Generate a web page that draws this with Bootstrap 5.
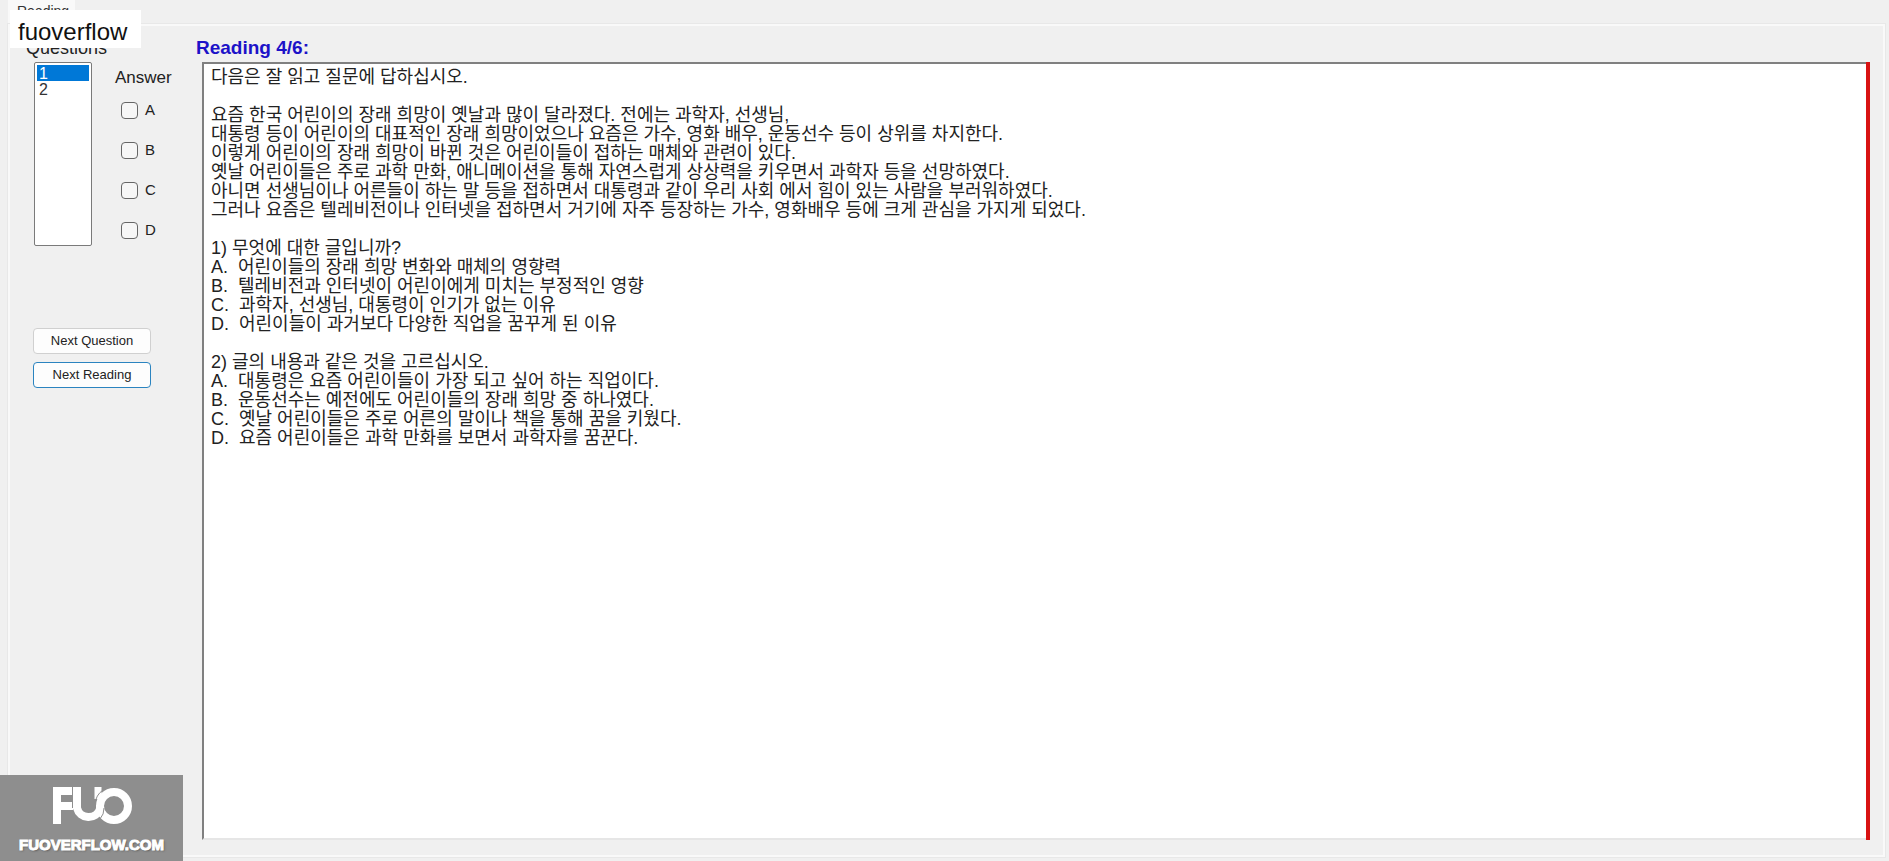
<!DOCTYPE html>
<html lang="ko">
<head>
<meta charset="utf-8">
<meta name="viewport" content="width=device-width, initial-scale=1">
<title>Reading</title>
<link href="https://cdn.jsdelivr.net/npm/bootstrap@5.3.0/dist/css/bootstrap.min.css" rel="stylesheet">
<style>
  body { background: #f0f0f0; color: #222; font: 16px/20px "Liberation Sans", "Noto Sans CJK KR", sans-serif; }
  .tab-strip { height: 24px; padding-left: 8px; }
  .tab-strip a { width: 67px; padding-left: 9px; background: #f9f9f9; color: #333; font-size: 14px; line-height: 22px; }
  .tab-page { margin: 0 4px 4px 8px; border: 2px solid #f9f9f9; outline: 1px solid #e8e8e8; min-height: 0; }
  .side { width: 192px; flex: none; padding: 12px 0 0 16px; }
  .side h2 { font-size: 18px; line-height: 20px; margin: 0 0 4px; }
  .answer-title { font-size: 17px; }
  .question-list { width: 58px; height: 184px; margin-left: 8px; padding: 2px; border: 1px solid #7a7a7a; background: #fff; color: #333; overflow: hidden; outline: 0; font: 16px/16px "Liberation Sans", sans-serif; }
  .question-list option { padding: 0 2px; height: 16px; min-height: 16px; line-height: 16px; }
  .question-list option:checked { background: #0078d7 linear-gradient(#0078d7, #0078d7); color: #fff; }
  .answers { padding: 7px 0 0 23px; }
  .answer-title { margin-bottom: 14px; }
  .answers .form-check { gap: 7px; margin: 0 0 20px 6px; padding: 0; min-height: 20px; font-size: 15px; }
  .answers .form-check-input { width: 17px; height: 17px; margin: 2px 0 0; float: none; border: 1px solid #666; border-radius: 4px; background-color: #f6f6f6; }
  .side-buttons { margin: 82px 0 0 7px; width: 118px; }
  .side-buttons .btn { height: 26px; padding: 0; font-size: 13px; line-height: 24px; color: #222; background: #fdfdfd; border: 1px solid #d0d0d0; border-radius: 4px; }
  .side-buttons .btn.default-action { border-color: #2b84c0; }
  .reader { padding: 12px 13px 15px 0; min-width: 0; }
  .reader h1 { margin: 0 0 4px -6px; font-size: 19px; font-weight: 700; line-height: 20px; color: #1c12c8; }
  .passage { resize: none; outline: 0; background: #fff; color: #222; border: 0 solid #808080; border-width: 2px 0 0 2px; border-bottom: 2px solid #e6e6e6; padding: 4px 7px; font: 18px/19px "Liberation Sans", "Noto Sans CJK KR", sans-serif; overflow: hidden; }
  .timer-bar { width: 4px; flex: none; background: #d81212; }
  .mark-top { left: 10px; top: 10px; width: 131px; height: 38px; padding-left: 8px; background: #fff; color: #111; font-size: 24px; line-height: 43px; z-index: 2; }
  .mark-bottom { left: 0; bottom: 0; width: 183px; height: 86px; background: #8e8e8e; color: #fff; z-index: 2; font: bold 15px/20px "Liberation Sans", sans-serif; padding-top: 10px; }
  .mark-bottom svg { margin-bottom: 8px; }
  .mark-bottom span { -webkit-text-stroke: 1px #fff; text-shadow: 1px 1px 2px #555; }
</style>
</head>
<body class="vh-100 d-flex flex-column overflow-hidden">
  <nav class="tab-strip d-flex">
    <a href="#page" class="text-decoration-none">Reading</a>
  </nav>
  <div class="mark-top position-absolute overflow-hidden">fuoverflow</div>

  <main id="page" class="tab-page d-flex flex-fill">
    <aside class="side">
      <h2><label for="questions">Questions</label></h2>
      <div class="d-flex align-items-start">
        <select id="questions" class="question-list" size="9">
          <option selected>1</option>
          <option>2</option>
        </select>
        <fieldset class="answers">
          <legend class="answer-title lh-1">Answer</legend>
          <div class="form-check d-flex"><input class="form-check-input" type="checkbox" id="a"><label for="a">A</label></div>
          <div class="form-check d-flex"><input class="form-check-input" type="checkbox" id="b"><label for="b">B</label></div>
          <div class="form-check d-flex"><input class="form-check-input" type="checkbox" id="c"><label for="c">C</label></div>
          <div class="form-check d-flex mb-0"><input class="form-check-input" type="checkbox" id="d"><label for="d">D</label></div>
        </fieldset>
      </div>
      <div class="side-buttons d-grid gap-2">
        <button type="button" class="btn">Next Question</button>
        <button type="button" class="btn default-action">Next Reading</button>
      </div>
    </aside>

    <section class="reader d-flex flex-column flex-fill">
      <h1>Reading 4/6:</h1>
      <div class="d-flex flex-fill">
        <textarea class="passage flex-fill" readonly spellcheck="false" aria-label="Reading">다음은 잘 읽고 질문에 답하십시오.

요즘 한국 어린이의 장래 희망이 옛날과 많이 달라졌다. 전에는 과학자, 선생님,
대통령 등이 어린이의 대표적인 장래 희망이었으나 요즘은 가수, 영화 배우, 운동선수 등이 상위를 차지한다.
이렇게 어린이의 장래 희망이 바뀐 것은 어린이들이 접하는 매체와 관련이 있다.
옛날 어린이들은 주로 과학 만화, 애니메이션을 통해 자연스럽게 상상력을 키우면서 과학자 등을 선망하였다.
아니면 선생님이나 어른들이 하는 말 등을 접하면서 대통령과 같이 우리 사회 에서 힘이 있는 사람을 부러워하였다.
그러나 요즘은 텔레비전이나 인터넷을 접하면서 거기에 자주 등장하는 가수, 영화배우 등에 크게 관심을 가지게 되었다.

1) 무엇에 대한 글입니까?
A.  어린이들의 장래 희망 변화와 매체의 영향력
B.  텔레비전과 인터넷이 어린이에게 미치는 부정적인 영향
C.  과학자, 선생님, 대통령이 인기가 없는 이유
D.  어린이들이 과거보다 다양한 직업을 꿈꾸게 된 이유

2) 글의 내용과 같은 것을 고르십시오.
A.  대통령은 요즘 어린이들이 가장 되고 싶어 하는 직업이다.
B.  운동선수는 예전에도 어린이들의 장래 희망 중 하나였다.
C.  옛날 어린이들은 주로 어른의 말이나 책을 통해 꿈을 키웠다.
D.  요즘 어린이들은 과학 만화를 보면서 과학자를 꿈꾼다.</textarea>
        <div class="timer-bar"></div>
      </div>
    </section>
  </main>

  <div class="mark-bottom position-absolute d-flex flex-column align-items-center">
    <svg width="80" height="42" viewBox="0 0 80 42" fill="none" stroke="#fff" stroke-width="8" role="img" aria-label="FUO">
      <path d="M5 39V6H21M5 21H21"/>
      <path d="M46 2V14" stroke-width="7"/>
      <circle cx="62" cy="21" r="14"/>
      <path d="M25 2V23A12 12 0 0 0 48 24V20"/>
      <path d="M20.500 2V23M43 19A19 19 0 0 1 51 5M52 23A16 16 0 0 1 48 34" stroke="#8e8e8e" stroke-width="1"/>
    </svg>
    <span>FUOVERFLOW.COM</span>
  </div>
  <script src="https://cdn.jsdelivr.net/npm/bootstrap@5.3.0/dist/js/bootstrap.bundle.min.js"></script>
</body>
</html>
